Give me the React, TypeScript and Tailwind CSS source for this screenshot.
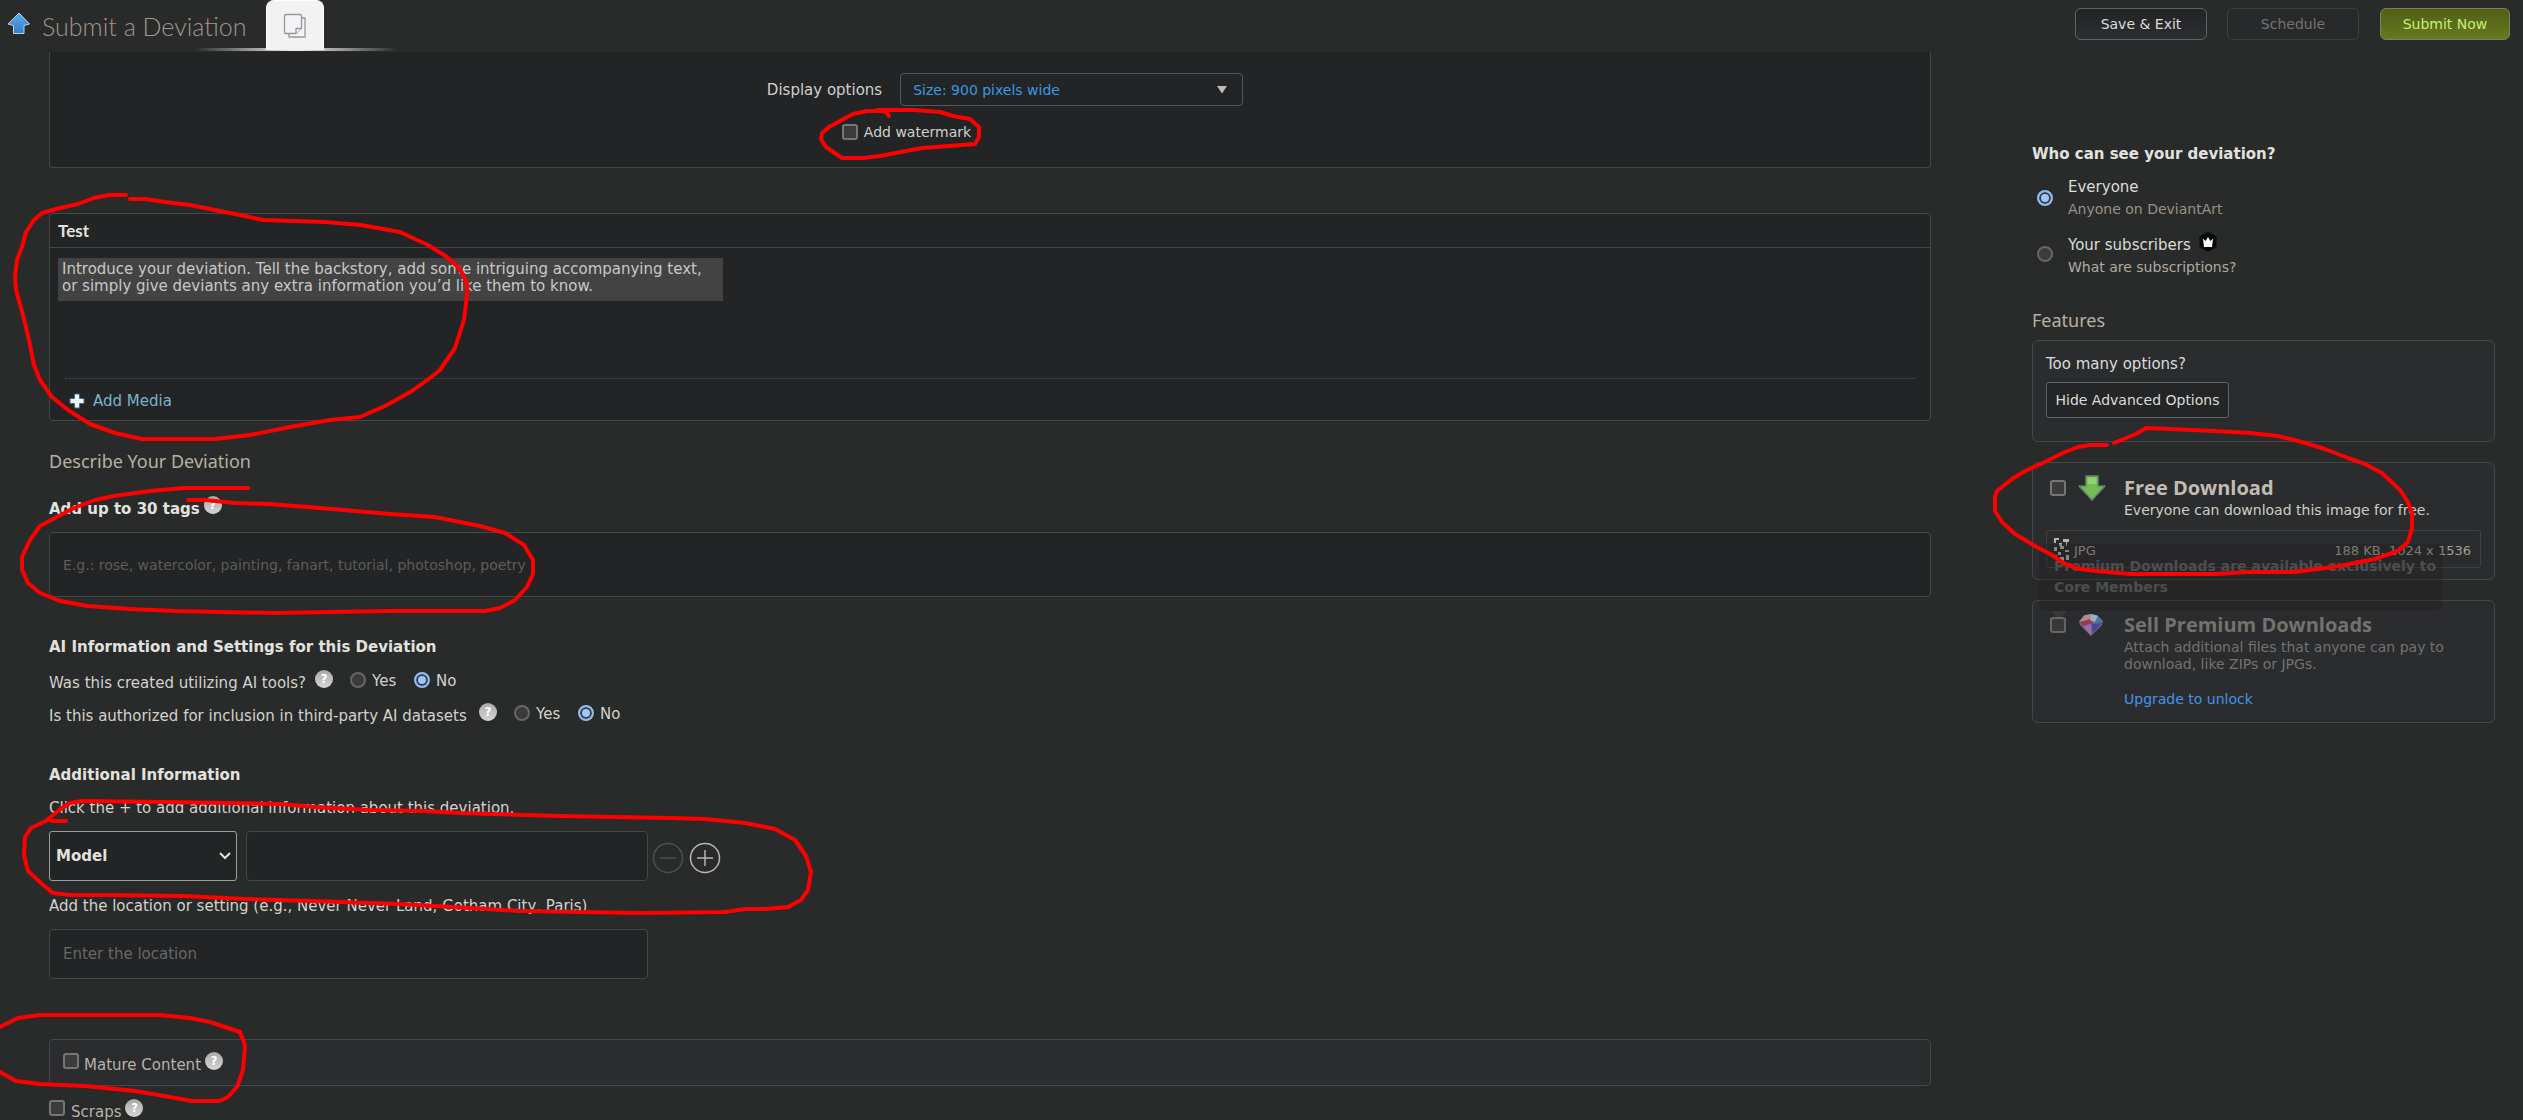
import React from 'react';

const panel = 'border border-[#444748] rounded bg-[#232425]';
const card = 'border border-[#444649] rounded-md bg-[#2b2c2e]';
const checkbox = 'appearance-none block w-4 h-4 shrink-0 rounded-[3px] border-2 border-[#757575] bg-[#3b3b3b]';
const radio = 'appearance-none block w-4 h-4 shrink-0 rounded-full border-2 border-[#666666] bg-[#3b3b3b] checked:border-[#8fbcf0] checked:bg-[#99c8ff] checked:shadow-[inset_0_0_0_2px_#3b3b3b]';

const Help = () => (
  <button type="button" aria-label="Help" className="ml-1 mb-[5px] w-[18px] h-[18px] shrink-0 rounded-full bg-gradient-to-b from-[#a9a9a9] to-[#d6d6d6] text-white text-xs leading-[18px] font-bold">
    ?
  </button>
);

const YesNo = ({ name }: { name: string }) => (
  <div className="flex items-end ml-[17px]">
    <input type="radio" id={`${name}-yes`} name={name} className={`${radio} mb-[5px]`} />
    <label htmlFor={`${name}-yes`} className="ml-[6px] mr-[14px] w-7 mb-[2px]">Yes</label>
    <input type="radio" id={`${name}-no`} name={name} defaultChecked className={`${radio} mb-[5px]`} />
    <label htmlFor={`${name}-no`} className="ml-[6px] mb-[2px]">No</label>
  </div>
);

const Header = () => (
  <header className="relative z-10 flex h-[52px] bg-[#292b2a] pr-[13px]">
    <svg viewBox="0 0 24 24" className="w-6 h-6 mt-3 ml-[7px]">
      <defs>
        <linearGradient id="up" x1="0" y1="0" x2="0" y2="1">
          <stop offset="0" stopColor="#5fa9ea" />
          <stop offset="1" stopColor="#2f7fca" />
        </linearGradient>
      </defs>
      <path d="M12 1 L22.500 12 L17 13.500 V21.500 H6.500 V13.500 L1 12 Z" fill="url(#up)" stroke="#b8d4ea" strokeWidth="1" strokeLinejoin="round" />
    </svg>
    <h1 className="ml-[11px] mt-2 w-[208px] whitespace-nowrap text-[25px] leading-9 font-light text-[#a0978a] font-[Lato,sans-serif]">Submit a Deviation</h1>
    <div className="relative ml-4 w-[58px]">
      <div className="absolute -left-[72px] top-12 w-[204px] h-[3px] bg-gradient-to-r from-transparent via-[#f2f2f2] to-transparent" />
      <button type="button" aria-label="Files" className="relative flex items-center justify-center w-full h-[50px] rounded-t-lg bg-[#f2f2f2] border border-b-0 border-white">
        <svg viewBox="0 0 24 26" className="w-6 h-[26px]" fill="#f4f4f6" stroke="#96969f" strokeWidth="1.300" strokeLinejoin="round">
          <path d="M6 5 H22 V24 H6 Z" />
          <path d="M3 1.500 H17 Q18.500 1.500 18.500 3 V15 L13 20.500 H3 Q1.500 20.500 1.500 19 V3 Q1.500 1.500 3 1.500 Z" />
          <path d="M13 20.500 V15.500 H18.500" />
        </svg>
      </button>
    </div>
    <div className="flex ml-auto pt-2 text-sm">
      <button type="button" className="w-[132px] h-8 rounded-md border border-[#606367] bg-gradient-to-b from-[#222325] to-[#2d2e31] text-[#dcdcd8]">Save &amp; Exit</button>
      <button type="button" disabled className="ml-5 w-[132px] h-8 rounded-md border border-[#3d3f40] bg-[#28292a] text-[#747474]">Schedule</button>
      <button type="button" className="ml-[21px] w-[130px] h-8 rounded-md border border-[#7b8068] bg-gradient-to-b from-[#525f16] to-[#68791f] text-[#c5ee7c]">Submit Now</button>
    </div>
  </header>
);

const MainForm = () => (
  <main className="flex-1 min-w-0">
    <section className="h-[116px] px-5 pt-[21px] border border-t-0 border-[#444748] rounded-b bg-[#232425]">
      <div className="flex justify-center items-center pl-[30px]">
        <label htmlFor="size" className="text-[#d0d0cc]">Display options</label>
        <div className="relative ml-[18px]">
          <select id="size" className="appearance-none block w-[343px] h-[33px] pl-3 rounded border border-[#55585b] bg-[#232425] text-sm text-[#3b97e3]">
            <option>Size: 900 pixels wide</option>
          </select>
          <svg viewBox="0 0 10 8" className="absolute right-4 top-[13px] w-[10px] h-2 pointer-events-none"><path d="M0 0 H10 L5 7.500 Z" fill="#bdbdbd" /></svg>
        </div>
      </div>
      <div className="flex justify-center items-center gap-[6px] mt-4 pr-[167px]">
        <input type="checkbox" id="watermark" className={checkbox} />
        <label htmlFor="watermark" className="text-sm leading-5 text-[#d0d0cc]">Add watermark</label>
      </div>
    </section>

    <section className={`${panel} mt-[45px] h-[208px] flex flex-col`}>
      <h2 className="h-[34px] pl-2 pt-1 border-b border-[#444748] font-[Lato,sans-serif] font-bold text-[17px] leading-[26px] text-[#e2e2de]">Test</h2>
      <div className="px-2 pt-[10px] flex-1">
        <div contentEditable suppressContentEditableWarning role="textbox" aria-label="Description" className="w-[665px] h-[43px] pl-1 pt-[3px] whitespace-nowrap bg-[#434343] leading-[17px] text-[#c8c8c8]">
          Introduce your deviation. Tell the backstory, add some intriguing accompanying text,<br />
          or simply give deviants any extra information you’d like them to know.
        </div>
      </div>
      <div className="mx-[15px] h-[42px] flex items-center border-t border-dotted border-[#4c4f50]">
        <button type="button" className="ml-1 mt-[2px] flex items-center gap-2 text-[#7cb3cc]">
          <svg viewBox="0 0 16 16" className="w-4 h-4"><path d="M5.500 1 H10.500 V5.500 H15 V10.500 H10.500 V15 H5.500 V10.500 H1 V5.500 H5.500 Z" fill="#eef7fa" stroke="#41687b" strokeWidth="1" /></svg>
          Add Media
        </button>
      </div>
    </section>

    <h2 className="mt-[26px] text-lg leading-7 text-[#b7b0a2] font-['Noto_Sans',sans-serif]">Describe Your Deviation</h2>

    <div className="flex items-end mt-[22px] h-[22px]">
      <label htmlFor="tags" className="font-bold text-[#e2e2de]">Add up to 30 tags</label>
      <Help />
    </div>
    <input id="tags" placeholder="E.g.: rose, watercolor, painting, fanart, tutorial, photoshop, poetry" className={`${panel} block mt-[13px] w-full h-[65px] px-[13px] text-sm placeholder:text-[#5d5d5b]`} />

    <h3 className="mt-10 font-bold leading-5 text-[#e2e2de]">AI Information and Settings for this Deviation</h3>
    <div className="flex items-end mt-3 h-6"><span className="w-[262px]">Was this created utilizing AI tools?</span><Help /><YesNo name="ai-tools" /></div>
    <div className="flex items-end mt-[9px] h-6"><span className="w-[426px]">Is this authorized for inclusion in third-party AI datasets</span><Help /><YesNo name="ai-datasets" /></div>

    <h3 className="mt-[39px] font-bold leading-5 text-[#e2e2de]">Additional Information</h3>
    <p className="mt-[13px] leading-5">Click the + to add additional information about this deviation.</p>
    <div className="flex items-center mt-[13px]">
      <div className="relative">
        <select aria-label="Information type" className="appearance-none block w-[188px] h-[50px] pl-[6px] rounded-[3px] border border-[#9b9e9f] bg-[#232425] font-bold text-[#e2e2de]">
          <option>Model</option>
        </select>
        <svg viewBox="0 0 12 8" className="absolute right-[6px] top-[21px] w-3 h-2 pointer-events-none" fill="none" stroke="#e2e2de" strokeWidth="2"><path d="M1 1 L6 6 L11 1" /></svg>
      </div>
      <input aria-label="Information" className={`${panel} ml-[9px] w-[402px] h-[50px] px-3`} />
      <button type="button" aria-label="Remove" disabled className="ml-1 mt-1">
        <svg viewBox="0 0 32 32" className="w-8 h-8" fill="none" stroke="#4c4f50" strokeWidth="1.500"><circle cx="16" cy="16" r="14.500" /><path d="M8 16 H24" /></svg>
      </button>
      <button type="button" aria-label="Add" className="ml-[5px] mt-1">
        <svg viewBox="0 0 32 32" className="w-8 h-8" fill="none" stroke="#b5b5b5" strokeWidth="1.500"><circle cx="16" cy="16" r="14.500" /><path d="M8 16 H24 M16 8 V24" /></svg>
      </button>
    </div>
    <label htmlFor="location" className="block mt-[15px] leading-5">Add the location or setting (e.g., Never Never Land, Gotham City, Paris)</label>
    <input id="location" placeholder="Enter the location" className={`${panel} block mt-[13px] w-[599px] h-[50px] px-[13px] placeholder:text-[#686866]`} />

    <div className="mt-[60px] h-[47px] pl-[13px] pb-[10px] flex items-end border border-[#444649] rounded bg-[#2b2c2e] text-[#b7b3a9]">
      <input type="checkbox" id="mature" className={`${checkbox} mb-[6px]`} />
      <label htmlFor="mature" className="ml-[5px] leading-5">Mature Content</label>
      <Help />
    </div>
    <div className="flex items-end mt-3 h-6 text-[#b7b3a9]">
      <input type="checkbox" id="scraps" className={`${checkbox} mb-[6px]`} />
      <label htmlFor="scraps" className="ml-[6px] leading-5">Scraps</label>
      <Help />
    </div>
  </main>
);

const Diamond = () => (
  <svg viewBox="0 0 24 22" className="w-6 h-[22px] opacity-80">
    <path d="M6 1 Q12 -0.500 18 1 L24 7 L23 11 L12 22 L1 11 L0 7 Z" fill="#7d6fae" />
    <path d="M5 1.500 L12 0 L11 6 L0.500 8 Z" fill="#d0a7ab" />
    <path d="M1 8 L11 5 L13 10 L4 12 Z" fill="#b8404c" />
    <path d="M12 0 L19 2 L16 8 L11 6 Z" fill="#b9d6de" />
    <path d="M19 2 L24 8 L16 9 Z" fill="#4f8fb5" />
    <path d="M13 10 L23 9 L14 19 Z" fill="#4a50a8" />
    <path d="M4 12 L12 10 L12 22 Z" fill="#b77cc4" />
  </svg>
);

const Sidebar = () => (
  <aside className="w-[463px] shrink-0 mr-7 pt-[92px] text-[#dcdcd8]">
    <fieldset>
      <legend className="font-bold leading-5 text-[#e2e2de]">Who can see your deviation?</legend>
      <div className="flex items-center mt-3 pl-[5px]">
        <input type="radio" id="everyone" name="audience" defaultChecked className={radio} />
        <label htmlFor="everyone" className="ml-[15px] leading-[22px]">Everyone<span className="block text-sm leading-[22px] text-[#989286]">Anyone on DeviantArt</span></label>
      </div>
      <div className="flex items-start mt-[14px] pl-[5px]">
        <input type="radio" id="subscribers" name="audience" className={`${radio} mt-3`} />
        <div className="ml-[15px]">
          <label htmlFor="subscribers" className="flex gap-2 leading-[22px]">
            Your subscribers
            <svg viewBox="0 0 18 20" className="w-[18px] h-5 -mt-[2px]">
              <path d="M9 0 L17.500 4.500 V15 L9 20 L0.500 15 V4.500 Z" fill="#06070d" />
              <path d="M4 6.500 L6.500 9 L9 5 L11.500 9 L14 6.500 L13 15 H5 Z" fill="#fff" />
            </svg>
          </label>
          <a href="#" className="block text-sm leading-[22px] text-[#b0aaa0]">What are subscriptions?</a>
        </div>
      </div>
    </fieldset>

    <h2 className="mt-7 text-lg leading-7 text-[#b7b0a2] font-['Noto_Sans',sans-serif]">Features</h2>
    <section className={`${card} mt-[6px] h-[102px] pl-[13px] pt-[13px]`}>
      <p className="leading-5">Too many options?</p>
      <button type="button" className="mt-2 w-[183px] h-9 rounded-[3px] border border-[#5d6265] bg-[#242527] text-sm">Hide Advanced Options</button>
    </section>

    <section className={`${card} mt-5 h-[118px] px-[13px] pt-3`}>
      <div className="flex pl-1">
        <input type="checkbox" id="free" className={`${checkbox} mt-[5px]`} />
        <svg viewBox="0 0 28 26" className="ml-[12px] w-7 h-[26px]">
          <path d="M8 1 H20 V11 H27 L14 25 L1 11 H8 Z" fill="#72bd55" stroke="#67826a" strokeWidth="1.500" strokeLinejoin="round" />
          <path d="M9.500 2.500 H18.500 V9 H9.500 Z" fill="#8fd46a" />
        </svg>
        <label htmlFor="free" className="ml-[18px] text-xl leading-[26px] font-bold text-[#c2bdb2] font-['Open_Sans',sans-serif]">
          Free Download
          <span className="block font-normal text-sm leading-[18px] text-[#cfccc5] font-['DejaVu_Sans',sans-serif]">Everyone can download this image for free.</span>
        </label>
      </div>
      <div className="flex items-center mt-[11px] h-[38px] px-[7px] rounded-[3px] border border-[#3f4143] text-[13px] text-[#a8a193]">
        <svg viewBox="0 0 15 23" className="w-[15px] h-[23px]">
          <rect width="15" height="23" fill="#2a2a2a" />
          <path d="M0 0 H5 V2 H2 V5 H0 Z M9 1 H15 V4 H13 V8 H12 V4 H9 Z M5 5 H8 V8 H10 V11 H6 V8 H5 Z M0 9 H3 V13 H0 Z M11 12 H15 V14 H11 Z M4 14 H7 V17 H4 Z M0 17 H3 V20 H0 Z M6 19 H10 V23 H6 Z M12 17 H15 V22 H12 Z" fill="#b4b4b4" />
        </svg>
        <span className="ml-[5px] mt-1">JPG</span>
        <span className="ml-auto mt-1 mr-[2px]">188 KB, 1024 x 1536</span>
      </div>
    </section>

    <section className={`${card} relative mt-5 h-[123px] pl-[17px] pt-[10px] flex`}>
      <div role="tooltip" className="absolute left-[6px] -top-[57px] w-[404px] h-[67px] pl-[15px] pt-3 whitespace-nowrap rounded-md bg-[#1d1f1e]/30 text-sm font-bold leading-[21px] text-[#4d4e4e]">
        Premium Downloads are available exclusively to<br />
        Core Members
        <span className="absolute left-3 top-full border-x-8 border-t-8 border-x-transparent border-t-[#383a3a]" />
      </div>
      <input type="checkbox" id="sell" className={`${checkbox} relative mt-[6px] opacity-80`} />
      <div className="ml-[13px] w-7 mt-[3px]"><Diamond /></div>
      <div className="ml-[17px] text-sm leading-[17px] text-[#74726e]">
        <label htmlFor="sell" className="block text-xl leading-[28px] font-bold font-['Open_Sans',sans-serif]">Sell Premium Downloads</label>
        <p className="w-[330px]">Attach additional files that anyone can pay to download, like ZIPs or JPGs.</p>
        <a href="#" className="block mt-[18px] text-[#4294e8]">Upgrade to unlock</a>
      </div>
    </section>
  </aside>
);

// Hand-drawn marker circles over the form
const Marks = () => (
  <svg viewBox="0 0 2523 1120" className="absolute left-0 top-0 w-full pointer-events-none" fill="none" stroke="#fe0000" strokeWidth="4" strokeLinecap="round" strokeLinejoin="round">
    <path d="M889 116 L886 112 L877 110 H914 L940 112 L953 116 L970 119 L979 127 V137 L975 144 L922 148 L880 156 L863 158 H842 L826 147 L821 139 L822 133 L829 127 L840 121 L853 114 L867 111 H880" />
    <path d="M126 195 H109 L94 198 L78 204 L56 209 L42 213 L34 220 L26 232 L22 247 L17 260 L15 277 L16 290 L23 315 L29 340 L34 365 L40 380 L52 397 L68 410 L90 424 L115 433 L142 439 H215 L250 435 L290 427 L330 420 L360 417 L385 406 L412 391 L430 378 L440 370 L455 348 L464 320 L467 295 V283 L460 269 L447 257 L428 245 L400 232 L361 225 L325 222 L263 220 L245 216 L220 211 L205 208 L190 205 L165 202 L145 199 H130" />
    <path d="M248 488 H184 L150 491 L114 496 L95 500 L74 508 L55 518 L40 526 L30 540 L22 557 L22 570 L28 583 L40 593 L60 601 L88 606 L130 609 L175 611 L220 612 L275 613 L330 612 L390 611 H485 L500 608 L515 600 L527 587 L533 574 V560 L524 545 L505 533 L480 526 L435 517 L390 514 L355 511 L320 508 L268 504 L235 503 L205 500 H188" />
    <path d="M66 821 H52 L48 819 L62 808 L70 803 L82 801 L165 802 L280 804 L315 807 L370 810 L425 811 L460 813 L560 816 L670 818 L705 819 L745 823 L775 829 L795 840 L806 856 L811 872 L808 890 L801 900 L788 907 L765 909 H745 L725 912 L640 913 L520 911 L470 908 L400 904 L310 901 L245 899 L185 896 L105 895 L70 895 L53 893 L42 884 L28 871 L24 855 L25 837 L31 828 L48 820" />
    <path d="M-2 1028 L18 1018 L40 1015 H160 L190 1018 L210 1022 L225 1027 L240 1032 L245 1045 L243 1070 L237 1087 L228 1097 L219 1101 H192 L170 1097 L135 1091 L85 1086 L40 1084 L16 1081 L-2 1071" />
    <path d="M2107 445 H2090 L2078 447 L2065 452 L2045 462 L2025 471 L2012 479 L1997 491 L1995 497 V511 L2002 522 L2015 534 L2035 546 L2052 555 L2065 564 L2080 569 L2097 571 L2130 574 H2215 L2250 572 H2295 L2340 566 L2375 559 L2398 551 L2408 542 L2412 528 V513 L2408 502 L2400 490 L2382 473 L2365 464 L2348 458 L2325 449 L2302 442 L2278 436 L2250 433 L2215 431 L2146 428 L2136 434 L2126 438 L2114 443" />
  </svg>
);

export default function App() {
  return (
    <div className="relative min-h-screen overflow-hidden bg-[#292b2a] font-['DejaVu_Sans',sans-serif] text-[15px] leading-5 text-[#d2d2ce]">
      <Header />
      <div className="flex gap-[101px] pl-[49px]">
        <MainForm />
        <Sidebar />
      </div>
      <Marks />
    </div>
  );
}
